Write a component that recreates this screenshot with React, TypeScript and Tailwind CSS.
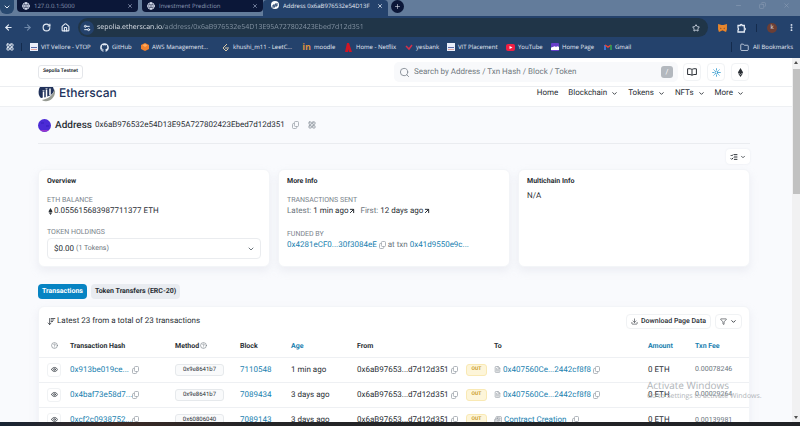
import React from "react";
import {
  ArrowLeft, ArrowRight, RotateCw, House, Star, EllipsisVertical, ChevronDown, X, Plus, Minus, Copy, Globe,
  Folder, Search, Sun, Eye, CircleHelp, FileText, ArrowUpRight, Filter, Download, ListChecks,
  ArrowDownWideNarrow, LayoutGrid, Settings2, Newspaper,
} from "lucide-react";
import { FaGithub, FaEthereum } from "react-icons/fa";

const link = "text-[#1a7fb0]";

function Tab({ title, width }: { title: string; width: string }) {
  return (
    <div className={`flex h-[12px] items-center gap-[4px] rounded-b-[4px] bg-[#0b1738] px-[5px] text-[#8d99b5] ${width}`}>
      <Globe size={8} strokeWidth={3} className="shrink-0 text-[#d5dced]" />
      <span className="grow truncate">{title}</span>
      <button aria-label={`Close ${title}`}><X size={6} strokeWidth={3} /></button>
    </div>
  );
}

function Bookmark({ icon, label, className }: { icon: React.ReactNode; label: string; className: string }) {
  return (
    <a href="#" className={`flex shrink-0 items-center gap-[3px] whitespace-nowrap ${className}`}>
      <span className="flex w-[9px] shrink-0 justify-center">{icon}</span>
      {label}
    </a>
  );
}

const VitIcon = () => (
  <svg width="8" height="8" viewBox="0 0 8 8"><path fill="#e9eefb" d="M0 0h8v8H0z" /><path fill="#5a6aa8" d="M1 4h6v1H1z" /><path fill="#e2a5a0" d="M1 6h6v1H1z" /></svg>
);

function BrowserChrome() {
  return (
    <header className="shrink-0 bg-[#24426c] font-['Open_Sans',sans-serif] text-[#e4ebf5]">
      <div className="flex h-[16px] items-start bg-[#637c9b] text-[6px] leading-[12px]">
        <button aria-label="Search tabs" className="mr-[3px] flex size-[14px] items-center justify-center rounded-b-[6px] bg-[#284970]">
          <ChevronDown size={8} strokeWidth={3} />
        </button>
        <Tab title="127.0.0.1:5000" width="mr-[4px] w-[121px]" />
        <Tab title="Investment Prediction" width="w-[121px]" />
        <div className="flex h-[16px] w-[125px] items-start gap-[4px] rounded-t-[4px] bg-[#24426c] pr-[5px] pl-[8px]">
          <svg width="8" height="12" viewBox="0 0 8 12" className="shrink-0"><circle cx="4" cy="5" r="4" fill="#fff" /><path d="M2 8V5h1v2h1V4h1v2h1V3" stroke="#24426c" fill="none" /></svg>
          <span className="grow overflow-hidden whitespace-nowrap">Address 0x6aB976532e54D13F</span>
          <button aria-label="Close tab" className="pt-[3px]"><X size={6} strokeWidth={3} /></button>
        </div>
        <button aria-label="New tab" className="ml-[3px] flex size-[13px] items-center justify-center rounded-[7px] bg-[#0b1738]">
          <Plus size={7} />
        </button>
        <div className="ml-auto flex items-center gap-[17px] pt-[2px] pr-[10px] text-[#8c9db5]">
          <button aria-label="Minimize"><Minus size={7} /></button>
          <button aria-label="Restore"><Copy size={7} className="-scale-x-100" /></button>
          <button aria-label="Close window"><X size={7} /></button>
        </div>
      </div>

      <div className="flex h-[23px] items-center px-[4px]">
        <div className="flex gap-[10px] pr-[8px]">
          <button aria-label="Back"><ArrowLeft size={9} strokeWidth={3} /></button>
          <button aria-label="Forward" className="text-[#6f88a9]"><ArrowRight size={9} strokeWidth={3} /></button>
          <button aria-label="Reload"><RotateCw size={9} strokeWidth={3} /></button>
          <button aria-label="Home page"><House size={9} strokeWidth={3} /></button>
        </div>
        <div className="flex h-[19px] grow items-center gap-[3px] rounded-full bg-[#203548] pr-[8px] pl-[2px]">
          <span className="flex size-[14px] items-center justify-center rounded-full bg-[#24426c]"><Settings2 size={8} strokeWidth={3} /></span>
          <input
            aria-label="Address bar"
            defaultValue="sepolia.etherscan.io/address/0x6aB976532e54D13E95A727802423Ebed7d12d351"
            className="h-[14px] min-w-0 grow bg-[linear-gradient(90deg,#f1f5fa_66px,#8796a6_66px)] bg-clip-text text-[7px] text-transparent outline-none"
          />
          <button aria-label="Bookmark this page"><Star size={8} strokeWidth={2.5} /></button>
        </div>
        <div className="flex items-center gap-[10px] pl-[10px]">
          <button aria-label="Wallet extension">
            <svg width="9" height="8" viewBox="0 0 10 9"><path fill="#e8862c" d="M0 0l4 1h2l4-1v6L9 9 6.500 8h-3L1 9 0 6z" /><path fill="#7c4a2b" d="M2 4l2 1-1 1zM8 4L6 5l1 1zM4 7h2v1H4z" /></svg>
          </button>
          <button aria-label="Extensions">
            <svg width="9" height="10" viewBox="0 0 9 10" fill="none" stroke="currentColor" strokeWidth="1.300"><path d="M1 2.500h2.200a1 1 0 012 0H7.300V5a1 1 0 010 2v2H1V7a1.200 1.200 0 000-2z" /></svg>
          </button>
          <span className="h-[8px] w-px bg-[#142b4d]" />
          <button aria-label="Profile" className="flex size-[10px] items-center justify-center rounded-full bg-[#6b3e35] text-[6px]">k</button>
          <button aria-label="Browser menu"><EllipsisVertical size={9} strokeWidth={3} /></button>
        </div>
      </div>

      <nav aria-label="Bookmarks" className="flex h-[19px] items-center pb-[3px] text-[6px] leading-[10px]">
        <button aria-label="Apps" className="mr-[7px] ml-[6px]"><LayoutGrid size={8} strokeWidth={3} /></button>
        <span className="mr-[7px] h-[8px] w-px bg-[#142b4d]" />
        <Bookmark className="w-[71px]" icon={<VitIcon />} label="VIT Vellore - VTOP" />
        <Bookmark className="w-[40px]" icon={<FaGithub size={9} />} label="GitHub" />
        <Bookmark className="w-[81px]" icon={<svg width="8" height="8" viewBox="0 0 8 8"><path fill="#f0822e" d="M4 0l4 2v4L4 8 0 6V2z" /><path fill="#ffac5e" d="M4 1l2.500 1.300L4 4 1.500 2.300z" /></svg>} label="AWS Management..." />
        <Bookmark className="w-[81px]" icon={<svg width="7" height="9" viewBox="0 0 7 9"><path d="M5 1L1 5l3 3 2-2M3 5h4" stroke="#d9c9a8" fill="none" /></svg>} label="khushi_m11 - LeetC..." />
        <Bookmark className="w-[42px]" icon={<b className="text-[9px] text-[#dc913c]">in</b>} label="moodle" />
        <Bookmark className="w-[60px]" icon={<svg width="7" height="9" viewBox="0 0 7 9"><path fill="#d01524" d="M2 0h2l3 9H4L3 6v3H0z" /></svg>} label="Home - Netflix" />
        <Bookmark className="w-[42px]" icon={<svg width="8" height="8" viewBox="0 0 8 8"><path d="M1 3l3 3 3-4" stroke="#d3304b" strokeWidth="1.500" fill="none" /></svg>} label="yesbank" />
        <Bookmark className="w-[60px]" icon={<VitIcon />} label="VIT Placement" />
        <Bookmark className="w-[44px]" icon={<svg width="9" height="7" viewBox="0 0 9 7"><rect width="9" height="7" rx="2" fill="#f01f43" /><path fill="#fff" d="M3.500 2l3 1.500-3 1.500z" /></svg>} label="YouTube" />
        <Bookmark className="w-[53px]" icon={<svg width="8" height="8" viewBox="0 0 8 8"><rect width="8" height="8" rx="1" fill="#6740ca" /><path fill="#fff" d="M0 7a2 2 0 012-3 2 2 0 013 0 2 2 0 013 3z" /></svg>} label="Home Page" />
        <Bookmark className="w-[30px]" icon={<svg width="8" height="6" viewBox="0 0 8 6"><path d="M1 6V1" stroke="#4285f4" strokeWidth="1.500" /><path d="M1 1l3 2 3-2" stroke="#ea4335" strokeWidth="1.500" fill="none" /><path d="M7 6V1" stroke="#34a853" strokeWidth="1.500" /></svg>} label="Gmail" />
        <a href="#" className="ml-auto flex items-center gap-[4px] border-l border-[#142b4d] pr-[7px] pl-[8px] whitespace-nowrap">
          <Folder size={9} />All Bookmarks
        </a>
      </nav>
    </header>
  );
}

function CopyButton({ className = "" }: { className?: string }) {
  return (
    <button aria-label="Copy" className={`shrink-0 text-[#9aa1a9] ${className}`}>
      <svg width="7" height="8" viewBox="0 0 7 8" fill="none" stroke="currentColor" strokeWidth="0.800">
        <rect x="2.400" y="0.500" width="4.100" height="5" rx="1" />
        <path d="M2.400 2.500H1.500a1 1 0 00-1 1v3a1 1 0 001 1h2.200a1 1 0 001-1v-1" />
      </svg>
    </button>
  );
}

const iconButton = "flex size-[18px] items-center justify-center rounded-[4px] border border-[#f1f3f5] bg-white";
const card = "rounded-[6px] border border-[#f3f5f8] bg-white shadow-[0_4px_8px_rgba(189,197,209,0.22)]";
const labelText = "text-[7px] leading-[10px] text-[#7b838c] uppercase";

function SiteHeader() {
  return (
    <>
      <div className="flex h-[29px] shrink-0 items-center border-b border-[#eceef1] bg-white pr-[43px] pl-[38px]">
        <span className="flex h-[14px] items-center rounded-[3px] border border-[#e4e6ea] px-[4px] text-[5px] font-bold">Sepolia Testnet</span>
        <form className="ml-auto flex h-[20px] w-[284px] items-center gap-[4px] rounded-[5px] bg-[#f8f9fb] px-[5px]">
          <Search size={11} strokeWidth={2} className="text-[#858d96]" />
          <input type="search" aria-label="Search" placeholder="Search by Address / Txn Hash / Block / Token" className="min-w-0 grow bg-transparent text-[8px] outline-none placeholder:text-[#717981]" />
          <kbd className="flex size-[12px] items-center justify-center rounded-[3px] bg-[#b3b8be] font-['Roboto',sans-serif] text-[7px] text-white">/</kbd>
        </form>
        <div className="ml-[5px] flex gap-[6px]">
          <button aria-label="Docs" className={iconButton}>
            <svg width="10" height="8" viewBox="0 0 10 8" fill="none" stroke="currentColor"><path d="M5 1.500C4 .7 2.500.6.600.8v5.700c1.800-.2 3.400 0 4.400.7 1-.7 2.600-.9 4.400-.7V.8C7.500.6 6 .7 5 1.500zM5 1.500v5.700" /></svg>
          </button>
          <button aria-label="Theme" className={`${iconButton} text-[#0784c3]`}><Sun size={9} strokeWidth={2} /></button>
          <button aria-label="Network" className={iconButton}><FaEthereum size={9} /></button>
        </div>
      </div>
      <div className="flex h-[20px] shrink-0 items-start overflow-hidden border-b border-[#eef0f3] bg-white pr-[48px] pl-[38px]">
        <a href="#" className="flex items-start gap-[3px] text-[#21325b]">
          <svg width="18" height="15" viewBox="0 0 18 15">
            <path fill="#21325b" d="M2 0h13l1 3c0 4-5 7-13 8C0 9 0 3 2 0z" />
            <path d="M5.500 11V4.500M8.500 10V2.500M12 8V1.500" stroke="#fff" strokeWidth="1.500" />
            <path d="M4.500 3.500h2M7.500 1.500h2" stroke="#fff" strokeWidth="0.600" />
            <path fill="#979b93" d="M16.800 2c2 9-7 15-13 11 6-1 11-4 13-11z" />
          </svg>
          <span className="font-['Inter',sans-serif] text-[12px] leading-[12px] font-medium">Etherscan</span>
        </a>
        <nav className="ml-auto flex gap-[10px] text-[8px] leading-[12px]">
          <a href="#">Home</a>
          {["Blockchain", "Tokens", "NFTs", "More"].map((item) => (
            <button key={item} className="flex items-center gap-[4px]">{item}<ChevronDown size={7} strokeWidth={3} /></button>
          ))}
        </nav>
      </div>
    </>
  );
}

function InfoCards() {
  return (
    <div className="mt-[5px] grid grid-cols-3 gap-[8px]">
      <section className={`${card} h-[98px] px-[8px] pt-[5px]`}>
        <h2 className="text-[7px] leading-[12px] font-bold">Overview</h2>
        <h3 className={`mt-[8px] ${labelText}`}>ETH Balance</h3>
        <p className="flex items-center text-[8px] leading-[12px]"><FaEthereum size={7} />0.055615683987711377 ETH</p>
        <label htmlFor="holdings" className={`mt-[10px] block ${labelText}`}>Token Holdings</label>
        <div className="mt-px grid h-[21px] items-center rounded-[4px] border border-[#eaecef]">
          <select id="holdings" className="col-start-1 row-start-1 h-full w-full appearance-none px-[6px] text-[8px] outline-none">
            <option>$0.00</option>
          </select>
          <span className="pointer-events-none col-start-1 row-start-1 flex items-center justify-between pr-[5px] pl-[28px] text-[7px] text-[#6c757d]">
            (1 Tokens)<ChevronDown size={8} strokeWidth={3} />
          </span>
        </div>
      </section>
      <section className={`${card} px-[8px] pt-[5px]`}>
        <h2 className="text-[7px] leading-[12px] font-bold">More Info</h2>
        <h3 className={`mt-[8px] ${labelText}`}>Transactions Sent</h3>
        <p className="flex items-center gap-[2px] text-[8px] leading-[12px]">
          <span className="text-[#6c757d]">Latest:</span>
          <a href="#" className="flex items-center">1 min ago<ArrowUpRight size={8} strokeWidth={3} /></a>
          <span className="ml-[2px] text-[#6c757d]">First:</span>
          <a href="#" className="flex items-center">12 days ago<ArrowUpRight size={8} strokeWidth={3} /></a>
        </p>
        <h3 className={`mt-[12px] ${labelText}`}>Funded By</h3>
        <p className="flex items-center gap-[2px] text-[8px] leading-[12px] whitespace-nowrap text-[#6c757d]">
          <a href="#" className={link}>0x4281eCF0...30f3084eE</a>
          <CopyButton />at txn<a href="#" className={link}>0x41d9550e9c...</a>
        </p>
      </section>
      <section className={`${card} px-[8px] pt-[5px]`}>
        <h2 className="text-[7px] leading-[12px] font-bold">Multichain Info</h2>
        <p className="mt-[3px] text-[8px] leading-[12px]">N/A</p>
      </section>
    </div>
  );
}

const rows = [
  { hash: "0x913be019ce...", method: "0x9e8641b7", block: "7110548", age: "1 min ago", to: "0x407560Ce...2442cf8f8", contract: false, fee: "0.00078246" },
  { hash: "0x4baf73e58d7...", method: "0x9e8641b7", block: "7089434", age: "3 days ago", to: "0x407560Ce...2442cf8f8", contract: false, fee: "0.00029264" },
  { hash: "0xcf2c0938752...", method: "0x60806040", block: "7089143", age: "3 days ago", to: "Contract Creation", contract: true, fee: "0.00139981" },
];

function Transactions() {
  return (
    <section className={`${card} mt-[7px] overflow-hidden`}>
      <div className="flex h-[28px] items-center pr-[7px] pl-[8px]">
        <p className="flex items-center gap-px text-[8px]"><ArrowDownWideNarrow size={9} strokeWidth={2} />Latest 23 from a total of 23 transactions</p>
        <button className="ml-auto flex h-[15px] items-center gap-[3px] rounded-[4px] border border-[#f0f2f4] px-[4px] text-[7px] font-medium"><Download size={7} strokeWidth={2} />Download Page Data</button>
        <button aria-label="Filter" className="ml-[4px] flex h-[15px] items-center gap-[3px] rounded-[4px] border border-[#f0f2f4] px-[4px]"><Filter size={7} /><ChevronDown size={7} strokeWidth={3} /></button>
      </div>
      <table className="w-full table-fixed text-left text-[8px] whitespace-nowrap">
        <colgroup>
          <col className="w-[31px]" /><col className="w-[105px]" /><col className="w-[65px]" /><col className="w-[51px]" />
          <col className="w-[66px]" /><col className="w-[109px]" /><col className="w-[28px]" /><col className="w-[154px]" />
          <col className="w-[47px]" /><col />
        </colgroup>
        <thead>
          <tr className="h-[22px] text-[7px]">
            <th><CircleHelp size={7} className="ml-[12px] text-[#6c757d]" /></th>
            <th>Transaction Hash</th>
            <th><span className="flex items-center gap-px">Method<CircleHelp size={7} className="text-[#6c757d]" /></span></th>
            <th>Block</th>
            <th><button className={link}>Age</button></th>
            <th>From</th>
            <th aria-label="Direction" />
            <th>To</th>
            <th className={link}>Amount</th>
            <th><button className={link}>Txn Fee</button></th>
          </tr>
        </thead>
        <tbody>
          {rows.map((r) => (
            <tr key={r.hash} className="h-[25px] border-t border-[#eef0f3]">
              <td><button aria-label="Preview" className="ml-[8px] flex size-[14px] items-center justify-center rounded-[3px] border border-[#f0f2f4] text-[#4a5057]"><Eye size={7} strokeWidth={3} /></button></td>
              <td><span className="flex items-center justify-between pr-[36px]"><a href="#" className={link}>{r.hash}</a><CopyButton /></span></td>
              <td><span className="flex h-[12px] w-[49px] items-center justify-center rounded-[3px] border border-[#e6e9ec] bg-[#f9fafb] text-[6px]">{r.method}</span></td>
              <td><a href="#" className={link}>{r.block}</a></td>
              <td>{r.age}</td>
              <td><span className="flex items-center gap-[2px]">0x6aB97653...d7d12d351<CopyButton /></span></td>
              <td><span className="flex h-[12px] w-[21px] items-center justify-center rounded-[3px] border border-[#f9e9b4] bg-[#fdf5d9] text-[5px] font-bold text-[#c99a1c]">OUT</span></td>
              <td>
                <span className="flex items-center gap-[2px]">
                  {r.contract ? <Newspaper size={8} className="text-[#858d96]" /> : <FileText size={7} className="text-[#858d96]" />}
                  <a href="#" className={link}>{r.to}</a>
                  <CopyButton className={r.contract ? "ml-[4px]" : ""} />
                </span>
              </td>
              <td>0 ETH</td>
              <td className="text-[7px] text-[#6c757d]">{r.fee}</td>
            </tr>
          ))}
        </tbody>
      </table>
    </section>
  );
}

export default function App() {
  return (
    <div className="relative flex h-screen flex-col overflow-hidden bg-[#f9fafd] font-['Roboto',sans-serif] text-[#2a2f35] [text-rendering:geometricPrecision] [&_button]:[text-rendering:inherit] [&_input]:[text-rendering:inherit] [&_select]:[text-rendering:inherit]">
      <BrowserChrome />
      <div className="flex min-h-0 grow">
        <div className="flex min-w-0 grow flex-col overflow-hidden">
          <SiteHeader />
          <main className="shrink-0 pr-[42px] pl-[38px]">
            <div className="flex h-[37px] items-center border-b border-[#eaecf0]">
              <svg width="13" height="13" viewBox="0 0 13 13"><circle cx="6.500" cy="6.500" r="6.500" fill="#4b2bd6" /><path fill="#9a35cc" d="M2 11h9a6.500 6.500 0 01-9 0z" /><path fill="#3f25c8" d="M3 3h3v2H3zM8 6h3v2H8z" /></svg>
              <h1 className="ml-[4px] text-[10px] font-medium">Address</h1>
              <span className="ml-[3px] text-[8px]">0x6aB976532e54D13E95A727802423Ebed7d12d351</span>
              <CopyButton className="ml-[7px]" />
              <button aria-label="QR code" className="ml-[9px] text-[#9aa1a9]"><LayoutGrid size={8} strokeWidth={3} /></button>
            </div>
            <div className="mt-[5px] flex justify-end">
              <button aria-label="View options" className="flex h-[15px] items-center gap-[2px] rounded-[4px] bg-white px-[4px] shadow-[0_0_2px_rgba(189,197,209,0.3)]"><ListChecks size={8} strokeWidth={3} /><ChevronDown size={6} strokeWidth={3} /></button>
            </div>
            <InfoCards />
            <div className="mt-[17px] flex gap-[4px] text-[7px] leading-[15px] font-bold">
              <button className="rounded-[4px] bg-[#0784c3] px-[4px] text-white">Transactions</button>
              <button className="rounded-[4px] bg-[#e9ecf1] px-[4px]">Token Transfers (ERC-20)</button>
            </div>
            <Transactions />
          </main>
        </div>
        <div aria-hidden="true" className="flex w-[8px] shrink-0 flex-col items-center bg-[#f1f1f2] pt-[3px] pb-[3px]">
          <svg width="4" height="3" viewBox="0 0 4 3"><path fill="#505050" d="M0 3l2-3 2 3z" /></svg>
          <div className="mt-[5px] h-[125px] w-[7px] bg-[#c1c1c1]" />
          <svg width="4" height="3" viewBox="0 0 4 3" className="mt-auto"><path fill="#505050" d="M0 0l2 3 2-3z" /></svg>
        </div>
      </div>
      <footer className="h-[4px] shrink-0 bg-[linear-gradient(90deg,#182433,#3a2a26_15%,#252527_30%,#202226)]" />
      <div className="pointer-events-none absolute right-[33px] bottom-[23px] w-[120px] font-['Open_Sans',sans-serif] whitespace-nowrap text-[#b0b4b8]">
        <p className="text-[10px] leading-[12px]">Activate Windows</p>
        <p className="text-[7px] leading-[12px]">Go to Settings to activate Windows.</p>
      </div>
    </div>
  );
}
